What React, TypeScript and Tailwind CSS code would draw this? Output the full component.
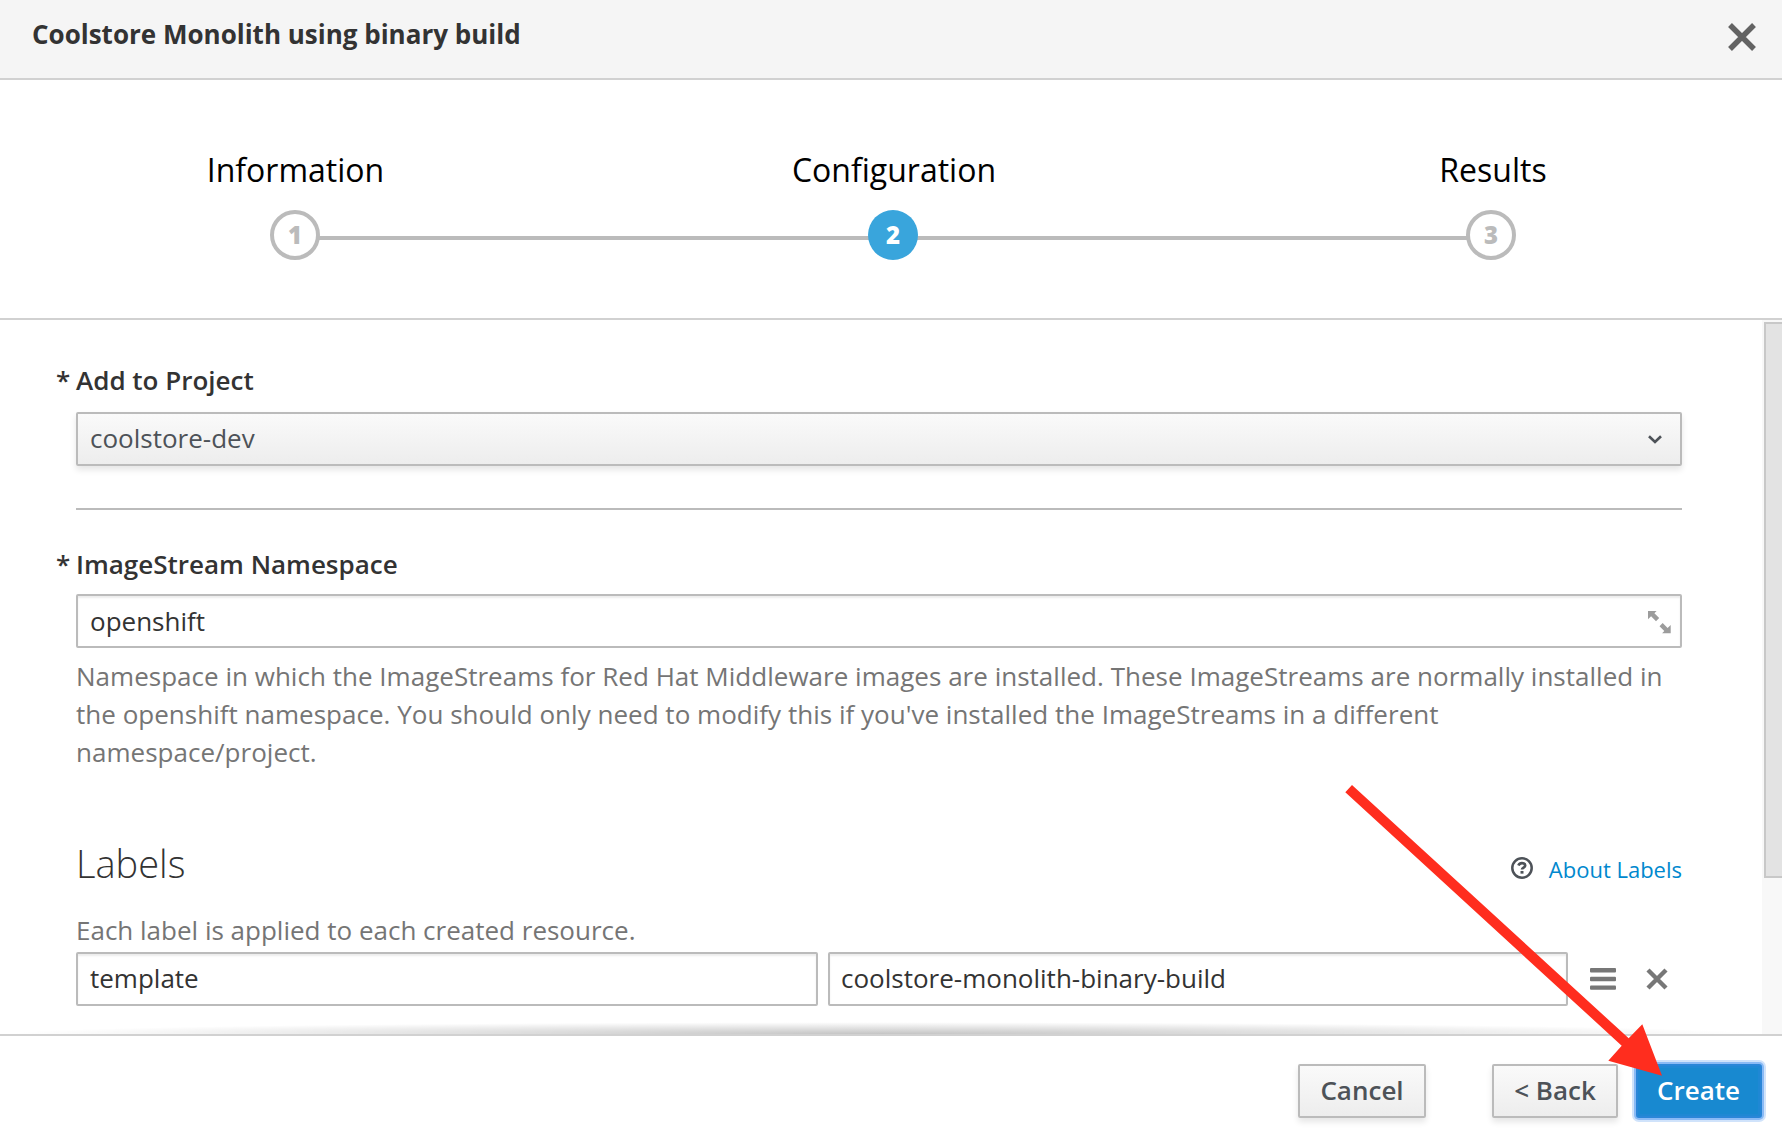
import React from "react";

const steps = [
  { n: 1, label: "Information", active: false, nudge: "pl-px" },
  { n: 2, label: "Configuration", active: true, nudge: "pl-0.5" },
  { n: 3, label: "Results", active: false, nudge: "pl-1" },
];

function Step({ n, label, active, nudge }: { n: number; label: string; active: boolean; nudge: string }) {
  return (
    <li className="flex w-[598px] shrink-0 flex-col items-center">
      <span className={"text-[32px] leading-[44px] text-black " + nudge}>{label}</span>
      <span
        className={
          active
            ? "relative mt-[18px] flex size-[50px] items-center justify-center rounded-full bg-[#39a5dc] text-[24px] leading-none font-extrabold text-white"
            : "relative mt-[18px] flex size-[50px] items-center justify-center rounded-full border-4 border-[#bbb] bg-white text-[24px] leading-none font-extrabold text-[#bbb]"
        }
      >
        {n}
      </span>
    </li>
  );
}

function Field({ value, className, children }: { value: string; className: string; children?: React.ReactNode }) {
  return (
    <div
      className={
        "flex h-[54px] items-center justify-between rounded-[2px] border-2 border-[#bbb] bg-white text-[#333] shadow-[inset_0_2px_2px_rgba(3,3,3,0.075)] " +
        className
      }
    >
      <span>{value}</span>
      {children}
    </div>
  );
}

function Label({ children }: { children: string }) {
  return (
    <div className="-ml-5 flex leading-[38px] font-semibold text-[#333]">
      <span className="w-5">*</span>
      <span>{children}</span>
    </div>
  );
}

const secondaryButton =
  "flex h-[54px] items-center justify-center rounded-[2px] border-2 border-[#bbb] bg-linear-to-b from-[#fafafa] to-[#ededed] pb-[3px] font-semibold text-[#4d5258] shadow-[0_4px_6px_rgba(3,3,3,0.1)]";

export default function App() {
  return (
    <div className="relative flex h-[1140px] w-[1782px] flex-col overflow-hidden bg-white font-['Open_Sans',sans-serif] text-[26px] leading-[38px]">
      <header className="flex h-20 shrink-0 justify-between border-b-2 border-[#d1d1d1] bg-[#f5f5f5] pr-[26px] pl-8">
        <h1 className="pt-[15px] font-bold text-[#333]">Coolstore Monolith using binary build</h1>
        <svg className="mt-[23px] size-7" viewBox="0 0 28 28" fill="none" stroke="#636363" strokeWidth="5.4">
          <path d="M2 2 26 26M26 2 2 26" />
        </svg>
      </header>

      <nav className="relative h-[240px] shrink-0 border-b-2 border-[#d1d1d1] pt-[68px]">
        <div className="absolute top-[156px] left-[295px] h-1 w-[1196px] bg-[#bbb]" />
        <ol className="-ml-1 flex">
          {steps.map((s) => (
            <Step key={s.n} {...s} />
          ))}
        </ol>
      </nav>

      <main className="flex min-h-0 flex-1">
        <div className="relative min-w-0 flex-1 overflow-hidden pt-[41px] pr-20 pl-[76px]">
          <Label>Add to Project</Label>
          <div className="mt-[13px] flex h-[54px] items-center justify-between rounded-[2px] border-2 border-[#bbb] bg-linear-to-b from-[#fafafa] to-[#ededed] pr-[18px] pl-3 text-[#4d5258] shadow-[0_4px_6px_rgba(3,3,3,0.1)]">
            <span className="pb-[3px]">coolstore-dev</span>
            <svg className="h-[9px] w-[14px]" viewBox="0 0 14 9" fill="none" stroke="#4d5258" strokeWidth="2.6">
              <path d="M1 1.2 7 7 13 1.2" />
            </svg>
          </div>
          <hr className="mt-[42px] border-t-2 border-[#bbb]" />
          <div className="pt-[35px]">
            <Label>ImageStream Namespace</Label>
          </div>
          <Field value="openshift" className="mt-[11px] pr-[9px] pl-3">
            <svg className="mt-[3px] size-[23px]" viewBox="0 0 23 23" fill="#9c9c9c">
              <path d="M0 0H8.6L6.4 2.2 11.2 7 8 10.2 3.1 5.3 0 8.3ZM22.7 22.3H14.1L16.3 20.1 11.5 15.3 14.7 12.1 19.6 17 22.7 14Z" />
            </svg>
          </Field>
          <p className="mt-[9px] tracking-[0.018px] text-[#757575]">
            Namespace in which the ImageStreams for Red Hat Middleware images are installed. These ImageStreams are
            normally installed in the openshift namespace. You should only need to modify this if you've installed the
            ImageStreams in a different namespace/project.
          </p>
          <div className="mt-[66px] flex h-[52px] items-baseline justify-between">
            <h2 className="text-[38px] leading-[52px] font-light text-[#333]">Labels</h2>
            <a className="flex items-baseline text-[22px] text-[#0088ce]">
              <svg
                className="mr-4 size-[22px] translate-y-px"
                viewBox="0 0 22 22"
                fill="none"
                stroke="#4d5258"
              >
                <circle cx="11" cy="11" r="9.7" strokeWidth="2.5" />
                <path d="M7.4 8.5C8.2 6.7 9.4 6.2 11 6.2c1.9 0 3.2 1 3.2 2.4 0 2.1-3.2 2-3.2 4" strokeWidth="2.7" />
                <path d="M9.5 15.3h3" strokeWidth="2.7" />
              </svg>
              About Labels
            </a>
          </div>
          <p className="mt-[22px] text-[#757575]">Each label is applied to each created resource.</p>
          <div className="mt-[3px] flex items-center">
            <Field value="template" className="w-[742px] pb-[3px] pl-3" />
            <Field value="coolstore-monolith-binary-build" className="ml-2.5 w-[740px] pb-[3px] pl-[11px]" />
            <svg className="ml-[22px] h-[22px] w-[26px]" viewBox="0 0 26 22" fill="#777">
              <rect width="26" height="4.4" rx="1" />
              <rect y="8.8" width="26" height="4.4" rx="1" />
              <rect y="17.4" width="26" height="4.4" rx="1" />
            </svg>
            <svg className="ml-[30px] size-[22px]" viewBox="0 0 22 22" fill="none" stroke="#777" strokeWidth="4.4">
              <path d="M2 2 20 20M20 2 2 20" />
            </svg>
          </div>
          <div className="absolute inset-x-0 bottom-0 h-3 bg-[radial-gradient(ellipse_at_50%_100%,rgba(0,0,0,0.23)_0%,rgba(0,0,0,0)_70%)]" />
        </div>
        <div className="w-5 shrink-0 bg-[#f8f8f8] pt-0.5 pl-0.5">
          <div className="h-[556px] border-y-2 border-l-2 border-[#c8c8c8] bg-[#e3e3e3]" />
        </div>
      </main>

      <footer className="flex h-[106px] shrink-0 border-t-2 border-[#d1d1d1] pt-7 pl-[1298px]">
        <button className={secondaryButton + " w-32"}>Cancel</button>
        <button className={secondaryButton + " ml-[66px] w-[126px]"}>&lt; Back</button>
        <button className="ml-[18px] flex h-[54px] w-[126px] items-center justify-center rounded-[3px] border-2 border-[#2a86d8] bg-[#1889d0] pr-px pb-[3px] font-semibold text-white shadow-[inset_0_0_0_2px_#1f88d4,0_0_0_2px_#8abaf5,0_0_0_4px_#d0e3fb]">
          Create
        </button>
      </footer>

      <svg className="absolute top-[780px] left-[1340px] h-[300px] w-[330px]" viewBox="1340 780 330 300" fill="#ff2d1e">
        <path d="M1352 785 1628.7 1038.3 1642.3 1024.3 1662 1075.7 1608.3 1060.7 1621.7 1045.7 1345.3 792.3Z" />
      </svg>
    </div>
  );
}
